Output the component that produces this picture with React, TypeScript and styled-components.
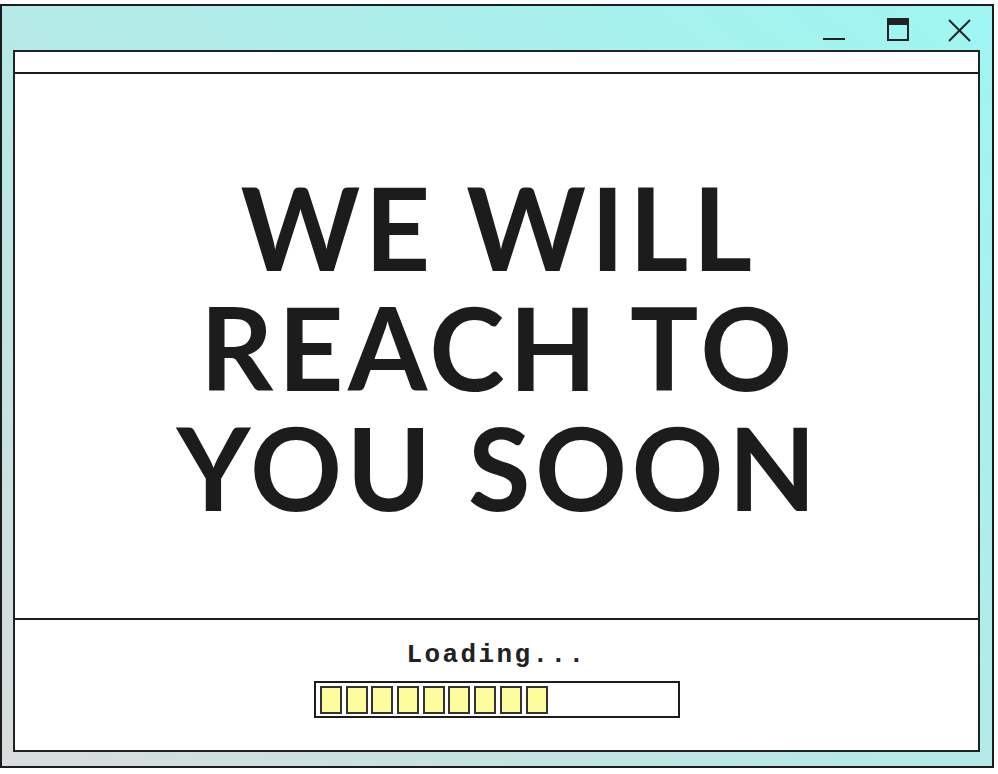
import React from "react";
import styled, { createGlobalStyle } from "styled-components";

const Global = createGlobalStyle`
  html, body { margin: 0; padding: 0; background: #ffffff; }
  body { width: 998px; height: 774px; overflow: hidden; }
`;

const Page = styled.div`
  padding-top: 4px;
  width: 998px;
  height: 774px;
  box-sizing: border-box;
`;

const Window = styled.div`
  width: 994px;
  height: 764px;
  box-sizing: border-box;
  border: 2px solid #1c1c1c;
  background: linear-gradient(40deg, #d9dcdc 0%, #b6e9e6 45%, #9ef6f2 100%);
  display: flex;
  flex-direction: column;
  padding: 0 12px 14px 11px;
`;

const TitleBar = styled.div`
  height: 44px;
  display: flex;
  align-items: flex-start;
  justify-content: flex-end;
  padding-right: 8px;
`;

const WinButton = styled.button<{ $w: number; $ml: number }>`
  all: unset;
  width: ${(p) => p.$w}px;
  margin-left: ${(p) => p.$ml}px;
  height: 44px;
  display: flex;
  align-items: flex-start;
`;

const Panel = styled.div`
  flex: 1;
  background: #ffffff;
  border: 2px solid #222222;
  display: flex;
  flex-direction: column;
`;

const AddressBar = styled.div`
  height: 20px;
  border-bottom: 2px solid #1c1c1c;
`;

const Content = styled.main`
  flex: 1;
  display: flex;
  align-items: center;
  justify-content: center;
`;

const Headline = styled.h1`
  margin: 0;
  font-family: "Lato", "Open Sans", sans-serif;
  font-weight: 700;
  font-size: 114px;
  line-height: 120px;
  color: #1c1c1c;
  text-align: center;
  text-transform: uppercase;
  letter-spacing: 4.5px;
  padding-top: 2px;
  padding-left: 4px;
`;

const Footer = styled.footer`
  height: 132px;
  border-top: 2px solid #1c1c1c;
  display: flex;
  flex-direction: column;
  align-items: center;
  padding-top: 20px;
  box-sizing: border-box;
`;

const LoadingText = styled.div`
  font-family: "Liberation Mono", "Courier New", monospace;
  font-weight: 700;
  font-size: 26px;
  line-height: 30px;
  letter-spacing: 2.4px;
  color: #222222;
  margin-bottom: 11px;
`;

const Bar = styled.div`
  width: 366px;
  height: 37px;
  box-sizing: border-box;
  border: 2px solid #1c1c1c;
  display: flex;
  align-items: center;
  gap: 3.7px;
  padding-left: 4.5px;
`;

const Block = styled.div`
  width: 22px;
  height: 28px;
  box-sizing: border-box;
  border: 2.5px solid #333333;
  background: #fdfd9e;
`;

export default function App() {
  const blocks = Array.from({ length: 9 });
  return (
    <Page>
      <Global />
      <Window>
        <TitleBar>
          <WinButton $w={24} $ml={0} aria-label="minimize">
            <svg width="24" height="44" viewBox="0 0 24 44">
              <line x1="0" y1="33" x2="22" y2="33" stroke="#222" strokeWidth="2" />
            </svg>
          </WinButton>
          <WinButton $w={22} $ml={40} aria-label="maximize">
            <svg width="22" height="44" viewBox="0 0 22 44">
              <rect x="1" y="13" width="20" height="21" fill="none" stroke="#222" strokeWidth="2" />
              <rect x="1" y="13" width="20" height="6" fill="#222" />
            </svg>
          </WinButton>
          <WinButton $w={24} $ml={39} aria-label="close">
            <svg width="24" height="44" viewBox="0 0 24 44">
              <line x1="1" y1="14" x2="22" y2="35" stroke="#222" strokeWidth="2" />
              <line x1="22" y1="14" x2="1" y2="35" stroke="#222" strokeWidth="2" />
            </svg>
          </WinButton>
        </TitleBar>
        <Panel>
          <AddressBar />
          <Content>
            <Headline>
              We will
              <br />
              reach to
              <br />
              you soon
            </Headline>
          </Content>
          <Footer>
            <LoadingText>Loading...</LoadingText>
            <Bar>
              {blocks.map((_, i) => (
                <Block key={i} />
              ))}
            </Bar>
          </Footer>
        </Panel>
      </Window>
    </Page>
  );
}
